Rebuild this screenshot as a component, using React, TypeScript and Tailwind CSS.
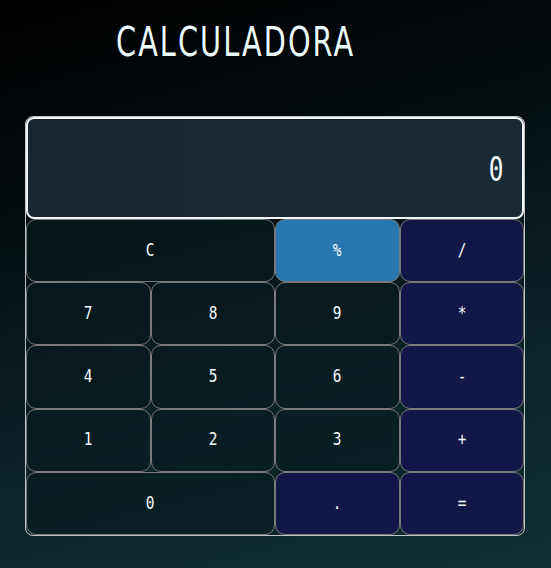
import React from 'react'

const keys: { label: string; kind: 'num' | 'pct' | 'op'; span?: boolean }[] = [
  { label: 'C', kind: 'num', span: true },
  { label: '%', kind: 'pct' },
  { label: '/', kind: 'op' },
  { label: '7', kind: 'num' },
  { label: '8', kind: 'num' },
  { label: '9', kind: 'num' },
  { label: '*', kind: 'op' },
  { label: '4', kind: 'num' },
  { label: '5', kind: 'num' },
  { label: '6', kind: 'num' },
  { label: '-', kind: 'op' },
  { label: '1', kind: 'num' },
  { label: '2', kind: 'num' },
  { label: '3', kind: 'num' },
  { label: '+', kind: 'op' },
  { label: '0', kind: 'num', span: true },
  { label: '.', kind: 'op' },
  { label: '=', kind: 'op' },
]

export default function App() {
  return (
    <div
      className="min-h-screen w-full bg-[linear-gradient(165deg,#000000_0%,#03090c_25%,#0b2529_70%,#0e2d32_100%)] text-white"
      style={{ fontFamily: '"DejaVu Sans Mono", monospace' }}
    >
      <div className="pl-[116px] pt-[20px]">
        <h1
          className="inline-block origin-left scale-x-[0.7] text-[41px] leading-[44px] tracking-[3px] text-[#eafcff]"
          style={{ fontFamily: '"DejaVu Sans", sans-serif' }}
        >
          CALCULADORA
        </h1>
      </div>

      {/* Calculator */}
      <div className="ml-[25px] mt-[52px] w-[500px] rounded-lg border border-[#bfc3c6]">
        <div className="flex h-[102px] items-center justify-end rounded-lg border-2 border-[#f2f4f5] bg-[linear-gradient(90deg,#172630,#182b36)] pr-[19px] pt-[2px]">
          <span className="inline-block origin-right scale-x-[0.72] text-[34px] text-[#f4fbff]">0</span>
        </div>
        <div className="grid grid-cols-4">
          {keys.map((k) => (
            <button
              key={k.label}
              className={`h-[63.2px] rounded-[10px] border border-[#7a7a7a] text-[17px] font-medium text-[#f4fbff] ${
                k.span ? 'col-span-2' : ''
              } ${
                k.kind === 'pct'
                  ? 'bg-[#2777ae]'
                  : k.kind === 'op'
                    ? 'bg-[#131747]'
                    : 'bg-[#061a1e]/60'
              }`}
            >
              <span className="inline-block scale-x-[0.85]">{k.label}</span>
            </button>
          ))}
        </div>
      </div>
    </div>
  )
}
